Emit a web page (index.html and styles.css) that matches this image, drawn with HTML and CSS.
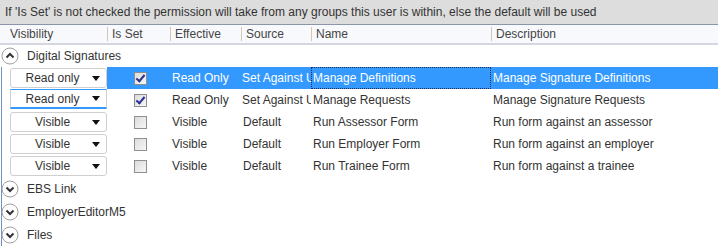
FILE: index.html
```html
<!DOCTYPE html>
<html lang="en">
<head>
  <meta charset="UTF-8">
  <title>Permissions</title>
  <link rel="stylesheet" href="styles.css">
</head>
<body>
  <div class="notice">If 'Is Set' is not checked the permission will take from any groups this user is within, else the default will be used</div>

  <div class="grid-head">
    <div class="hcell first">Visibility</div>
    <div class="hcell">Is Set</div>
    <div class="hcell">Effective</div>
    <div class="hcell">Source</div>
    <div class="hcell">Name</div>
    <div class="hcell">Description</div>
  </div>

  <!-- Expanded group -->
  <div class="group">
    <svg class="toggle" width="18" height="18" viewBox="0 0 18 18">
      <circle cx="9" cy="9" r="8" fill="#fff" stroke="#a0a0a0"/>
      <polyline points="5.5,10.5 9,7 12.5,10.5" fill="none" stroke="#333" stroke-width="2"/>
    </svg>
    <span>Digital Signatures</span>
  </div>

  <div class="tree">
    <div class="row selected">
      <div class="cell"><div class="select"><span>Read only</span><i class="arrow"></i></div></div>
      <div class="cell center"><span class="check on"></span></div>
      <div class="cell">Read Only</div>
      <div class="cell clip">Set Against User</div>
      <div class="cell focus">Manage Definitions</div>
      <div class="cell">Manage Signature Definitions</div>
    </div>
    <div class="row">
      <div class="cell"><div class="select active"><span>Read only</span><i class="arrow"></i></div></div>
      <div class="cell center"><span class="check on"></span></div>
      <div class="cell">Read Only</div>
      <div class="cell clip">Set Against User</div>
      <div class="cell">Manage Requests</div>
      <div class="cell">Manage Signature Requests</div>
    </div>
    <div class="row">
      <div class="cell"><div class="select"><span>Visible</span><i class="arrow"></i></div></div>
      <div class="cell center"><span class="check"></span></div>
      <div class="cell">Visible</div>
      <div class="cell">Default</div>
      <div class="cell">Run Assessor Form</div>
      <div class="cell">Run form against an assessor</div>
    </div>
    <div class="row">
      <div class="cell"><div class="select"><span>Visible</span><i class="arrow"></i></div></div>
      <div class="cell center"><span class="check"></span></div>
      <div class="cell">Visible</div>
      <div class="cell">Default</div>
      <div class="cell">Run Employer Form</div>
      <div class="cell">Run form against an employer</div>
    </div>
    <div class="row">
      <div class="cell"><div class="select"><span>Visible</span><i class="arrow"></i></div></div>
      <div class="cell center"><span class="check"></span></div>
      <div class="cell">Visible</div>
      <div class="cell">Default</div>
      <div class="cell">Run Trainee Form</div>
      <div class="cell">Run form against a trainee</div>
    </div>

    <!-- Collapsed groups -->
    <div class="group closed">
      <svg class="toggle" width="18" height="18" viewBox="0 0 18 18">
        <circle cx="9" cy="9" r="8" fill="#fff" stroke="#a0a0a0"/>
        <polyline points="5.5,7.5 9,11 12.5,7.5" fill="none" stroke="#333" stroke-width="2"/>
      </svg>
      <span>EBS Link</span>
    </div>
    <div class="group closed">
      <svg class="toggle" width="18" height="18" viewBox="0 0 18 18">
        <circle cx="9" cy="9" r="8" fill="#fff" stroke="#a0a0a0"/>
        <polyline points="5.5,7.5 9,11 12.5,7.5" fill="none" stroke="#333" stroke-width="2"/>
      </svg>
      <span>EmployerEditorM5</span>
    </div>
    <div class="group closed">
      <svg class="toggle" width="18" height="18" viewBox="0 0 18 18">
        <circle cx="9" cy="9" r="8" fill="#fff" stroke="#a0a0a0"/>
        <polyline points="5.5,7.5 9,11 12.5,7.5" fill="none" stroke="#333" stroke-width="2"/>
      </svg>
      <span>Files</span>
    </div>
  </div>
</body>
</html>
```

FILE: styles.css
```css
body {
  margin: 0;
  font-family: "Liberation Sans", Arial, sans-serif;
  font-size: 12px;
  color: #333;
  background: #fff;
  height: 248px;
  overflow: hidden;
}

.notice {
  height: 24px;
  line-height: 24px;
  padding-left: 5px;
  background: #dddddd;
  border-bottom: 1px solid #8a96a8;
  white-space: nowrap;
}

.grid-head {
  display: grid;
  grid-template-columns: 107px 63px 71px 70px 180px 1fr;
  height: 18px;
  background: #f8f9fd;
  border-bottom: 2px solid #d6d6de;
  color: #444;
}

.hcell {
  line-height: 14px;
  margin: 2px 0;
  padding-left: 4px;
  border-left: 1px solid #d4c8b0;
}

.hcell.first {
  border-left: none;
  padding-left: 10px;
}

.group {
  display: flex;
  align-items: center;
  gap: 8px;
  height: 22px;
  padding-left: 1px;
}

.group.closed {
  height: 23px;
  margin-left: -2px;
}

.toggle {
  display: block;
}

.tree {
  margin-left: 1px;
  border-left: 1px solid #7290c4;
}

.row {
  display: grid;
  grid-template-columns: 105px 63px 71px 70px 180px 1fr;
  height: 22px;
  line-height: 22px;
}

.cell {
  white-space: nowrap;
  overflow: hidden;
  padding-left: 2px;
}

.cell.center {
  display: flex;
  align-items: center;
  padding-left: 27px;
}

.cell.clip {
  padding-left: 1px;
}

.row.selected .cell:not(:first-child) {
  background: #3399ff;
  color: #fff;
}

.cell.focus {
  outline: 1px dotted #1a2a4a;
  outline-offset: -1px;
}

.row .cell:first-child {
  padding-left: 8px;
}

.select {
  display: flex;
  align-items: center;
  height: 18px;
  margin-top: 1px;
  border: 1px solid #cfcfcf;
  border-radius: 3px;
  background: #fff;
  color: #333;
  line-height: 18px;
}

.select span {
  flex: 1;
  text-align: center;
  padding-left: 2px;
}

.select.active {
  border-top-color: #3399ff;
  border-bottom: 2px solid #3399ff;
  border-radius: 0;
  height: 17px;
  margin-top: 0;
}

.arrow {
  width: 0;
  height: 0;
  margin-right: 6px;
  border-left: 4px solid transparent;
  border-right: 4px solid transparent;
  border-top: 5px solid #111;
}

.check {
  display: block;
  width: 11px;
  height: 11px;
  border: 1px solid #8e8f8f;
  background: linear-gradient(135deg, #dcdcdc, #f6f6f6);
  position: relative;
}

.check.on::after {
  content: "";
  position: absolute;
  left: 3px;
  top: 0;
  width: 3px;
  height: 7px;
  border-right: 2px solid #2a2f8f;
  border-bottom: 2px solid #2a2f8f;
  transform: rotate(40deg);
}
```
